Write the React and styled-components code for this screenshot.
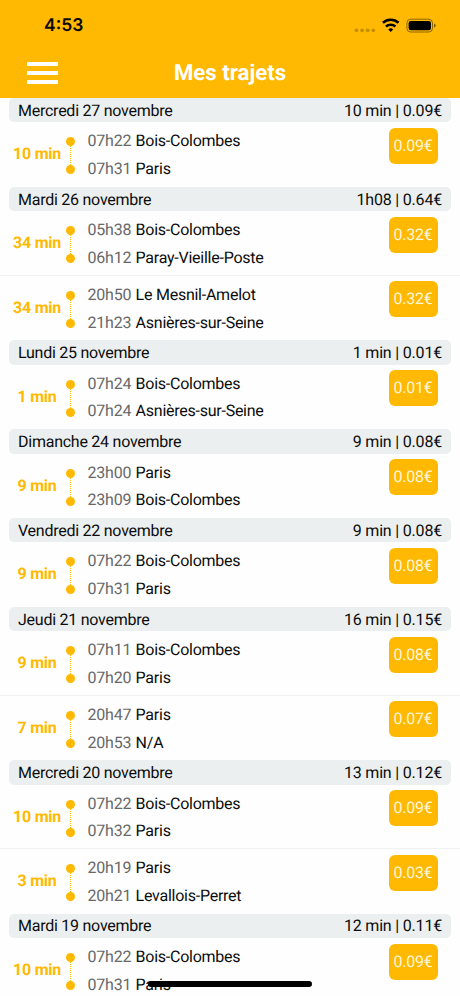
import React from 'react'
import styled, { createGlobalStyle } from 'styled-components';


const GlobalStyle = createGlobalStyle`
  * {
    box-sizing: border-box;
  }

  body {
    margin: 0;
    background: #fefefe;
    font-family: Roboto, 'Liberation Sans', sans-serif;
    text-rendering: geometricPrecision;
  }
`;

const Screen = styled.div`
  position: relative;
  width: 460px;
  height: 996px;
  overflow: hidden;
  display: flex;
  flex-direction: column;
`;

const TopBar = styled.header`
  flex: none;
  height: 98px;
  background: #FFB902;
`;

const StatusBar = styled.div`
  height: 50px;
  padding: 1px 24px 0 44px;
  display: flex;
  align-items: center;
  justify-content: space-between;
`;

const Clock = styled.span`
  color: #0d0a00;
  font-family: Inter, 'Liberation Sans', sans-serif;
  font-size: 17.5px;
  font-weight: 600;
`;

const StatusIcons = styled.svg`
  display: block;
  width: 84px;
  height: 18px;
`;

const NavBar = styled.div`
  height: 46px;
  padding: 0 27px;
  display: grid;
  grid-template-columns: 31px 1fr 31px;
  align-items: center;
`;

const MenuButton = styled.button`
  height: 22px;
  padding: 0;
  border: none;
  background: none;
  display: flex;
  flex-direction: column;
  justify-content: space-between;
  cursor: pointer;
`;

const MenuLine = styled.span`
  width: 31px;
  height: 3.6px;
  background: #fff;
`;

const Title = styled.h1`
  margin: 0;
  color: #fff;
  text-align: center;
  font-size: 22.2px;
  font-weight: 700;
  line-height: 28px;
`;

const TripList = styled.main`
  flex: 1;
  min-height: 0;
  overflow: hidden;
`;

const DayHeader = styled.div`
  height: 24.4px;
  margin: 0 9px;
  padding: 0 9px;
  border-radius: 5px;
  background: #EBEFF0;
  color: #0c0c0c;
  display: flex;
  align-items: center;
  justify-content: space-between;
  font-size: 16px;
  letter-spacing: -0.25px;
`;

const DayTotal = styled.span`
  letter-spacing: -0.19px;
`;

const TripRow = styled.div`
  height: 64.5px;
  padding-right: 22.5px;
  display: flex;
  align-items: flex-start;
  border-bottom: 1px solid ${({ $divided }) => ($divided ? '#f0f1f2' : 'transparent')};
`;

const Duration = styled.span`
  width: 74px;
  height: 64px;
  margin-right: -8.4px;
  color: #FFB902;
  text-align: center;
  font-size: 16px;
  font-weight: 700;
  letter-spacing: -0.25px;
  line-height: 64.4px;
`;

const Track = styled.div`
  width: 9px;
  padding-top: 15px;
  display: flex;
  flex-direction: column;
  align-items: center;
`;

const Dot = styled.span`
  width: 9px;
  height: 9px;
  border-radius: 50%;
  background: #FFB902;
`;

const DottedLine = styled.span`
  height: 19px;
  border-left: 1px dotted #FFB902;
`;

const Stops = styled.div`
  flex: 1;
  padding: 4.7px 0 0 13px;
`;

const Stop = styled.div`
  height: 27.7px;
  display: flex;
  align-items: center;
  color: #0c0c0c;
  font-size: 16px;
  letter-spacing: -0.25px;
`;

const StopTime = styled.span`
  width: 48px;
  color: #686868;
`;

const Price = styled.span`
  width: 49px;
  height: 36px;
  margin-top: 5.5px;
  border-radius: 6px;
  background: #FFB902;
  color: #fff6d9;
  text-align: center;
  font-size: 16px;
  letter-spacing: -0.2px;
  line-height: 36px;
`;

const HomeIndicator = styled.div`
  position: absolute;
  left: 148px;
  bottom: 9px;
  width: 164px;
  height: 6px;
  border-radius: 3px;
  background: #000;
`;


const days = [
  {
    date: 'Mercredi 27 novembre', total: '10 min | 0.09€',
    trips: [
      { duration: '10 min', price: '0.09€', stops: [['07h22', 'Bois-Colombes'], ['07h31', 'Paris']] },
    ],
  },
  {
    date: 'Mardi 26 novembre', total: '1h08 | 0.64€',
    trips: [
      { duration: '34 min', price: '0.32€', stops: [['05h38', 'Bois-Colombes'], ['06h12', 'Paray-Vieille-Poste']] },
      { duration: '34 min', price: '0.32€', stops: [['20h50', 'Le Mesnil-Amelot'], ['21h23', 'Asnières-sur-Seine']] },
    ],
  },
  {
    date: 'Lundi 25 novembre', total: '1 min | 0.01€',
    trips: [
      { duration: '1 min', price: '0.01€', stops: [['07h24', 'Bois-Colombes'], ['07h24', 'Asnières-sur-Seine']] },
    ],
  },
  {
    date: 'Dimanche 24 novembre', total: '9 min | 0.08€',
    trips: [
      { duration: '9 min', price: '0.08€', stops: [['23h00', 'Paris'], ['23h09', 'Bois-Colombes']] },
    ],
  },
  {
    date: 'Vendredi 22 novembre', total: '9 min | 0.08€',
    trips: [
      { duration: '9 min', price: '0.08€', stops: [['07h22', 'Bois-Colombes'], ['07h31', 'Paris']] },
    ],
  },
  {
    date: 'Jeudi 21 novembre', total: '16 min | 0.15€',
    trips: [
      { duration: '9 min', price: '0.08€', stops: [['07h11', 'Bois-Colombes'], ['07h20', 'Paris']] },
      { duration: '7 min', price: '0.07€', stops: [['20h47', 'Paris'], ['20h53', 'N/A']] },
    ],
  },
  {
    date: 'Mercredi 20 novembre', total: '13 min | 0.12€',
    trips: [
      { duration: '10 min', price: '0.09€', stops: [['07h22', 'Bois-Colombes'], ['07h32', 'Paris']] },
      { duration: '3 min', price: '0.03€', stops: [['20h19', 'Paris'], ['20h21', 'Levallois-Perret']] },
    ],
  },
  {
    date: 'Mardi 19 novembre', total: '12 min | 0.11€',
    trips: [
      { duration: '10 min', price: '0.09€', stops: [['07h22', 'Bois-Colombes'], ['07h31', 'Paris']] },
    ],
  },
];


const Trip = ({ trip, divided }) => (
  <TripRow $divided={divided}>
    <Duration>{trip.duration}</Duration>
    <Track>
      <Dot />
      <DottedLine />
      <Dot />
    </Track>
    <Stops>
      {trip.stops.map(([time, place], i) => (
        <Stop key={i}>
          <StopTime>{time}</StopTime>
          {place}
        </Stop>
      ))}
    </Stops>
    <Price>{trip.price}</Price>
  </TripRow>
);

const App = () => {
  return (
    <Screen>
      <GlobalStyle />

      <TopBar>
        <StatusBar>
          <Clock>4:53</Clock>
          <StatusIcons viewBox="0 0 84 18">
            {/* no signal */}
            <g fill="#000" opacity="0.22">
              <circle cx="4.4" cy="13.3" r="1.9" />
              <circle cx="10.1" cy="13.3" r="1.9" />
              <circle cx="15.7" cy="13.3" r="1.9" />
              <circle cx="21.3" cy="13.3" r="1.9" />
            </g>
            {/* wifi */}
            <g transform="translate(0 -.2)">
              <g fill="none" stroke="#000" strokeWidth="2.6">
                <path d="M30.9 6a11.4 11.4 0 0 1 15.6 0" />
                <path d="M34 9.7a7 7 0 0 1 9.4 0" />
              </g>
              <path d="M38.7 15.2l-2.4-2.6a3.5 3.5 0 0 1 4.8 0z" fill="#000" />
            </g>
            {/* battery */}
            <rect x="54.9" y="2.2" width="25.6" height="12.8" rx="3.8" fill="none" stroke="#000" strokeOpacity="0.45" />
            <rect x="56.6" y="4" width="22.4" height="9.2" rx="2.2" fill="#000" />
            <path d="M82 6.5q1.7 .6 1.7 2.1t-1.7 2.1z" fill="#000" opacity="0.5" />
          </StatusIcons>
        </StatusBar>
        <NavBar>
          <MenuButton aria-label="Menu">
            <MenuLine />
            <MenuLine />
            <MenuLine />
          </MenuButton>
          <Title>Mes trajets</Title>
        </NavBar>
      </TopBar>

      <TripList>
        {days.map((day) => (
          <section key={day.date}>
            <DayHeader>
              <span>{day.date}</span>
              <DayTotal>{day.total}</DayTotal>
            </DayHeader>
            {day.trips.map((trip, i) => (
              <Trip key={i} trip={trip} divided={i < day.trips.length - 1} />
            ))}
          </section>
        ))}
      </TripList>

      <HomeIndicator />
    </Screen>
  )
}

export default App;
